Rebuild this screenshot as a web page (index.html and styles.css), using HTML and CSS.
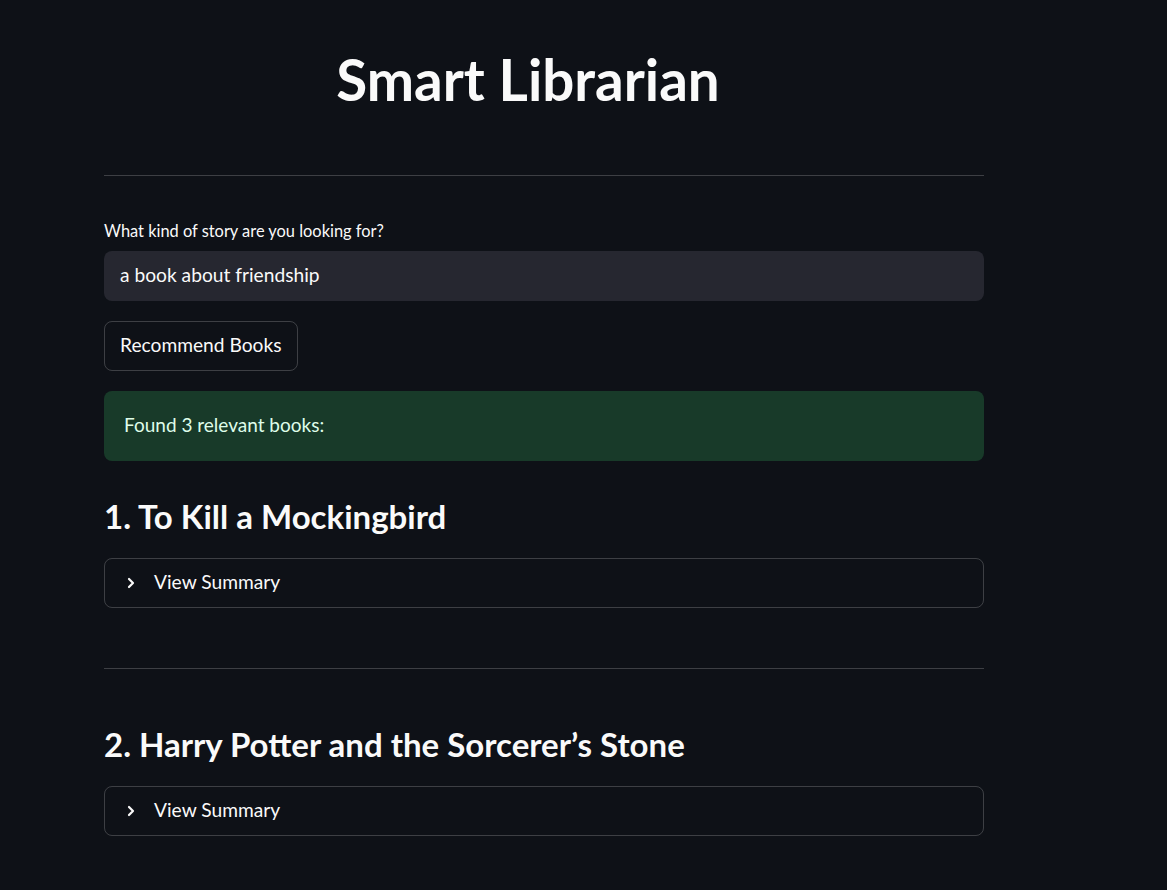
FILE: index.html
```html
<!DOCTYPE html>
<html lang="en">
<head>
<meta charset="utf-8">
<title>Smart Librarian</title>
<link rel="stylesheet" href="styles.css">
</head>
<body>
<main class="main">
  <h1 class="title">Smart Librarian</h1>
  <hr class="divider divider-top">
  <label class="field-label" for="q">What kind of story are you looking for?</label>
  <div class="text-input"><span id="q">a book about friendship</span></div>
  <button class="btn" type="button">Recommend Books</button>
  <div class="alert-success">Found 3 relevant books:</div>

  <h2 class="book-title first">1. To Kill a Mockingbird</h2>
  <div class="expander">
    <svg class="chev" width="10" height="12" viewBox="0 0 10 12"><polyline points="3,2 7,6 3,10" fill="none" stroke="#fafafa" stroke-width="2.2" stroke-linecap="round" stroke-linejoin="round"/></svg>
    <span>View Summary</span>
  </div>

  <hr class="divider divider-mid">

  <h2 class="book-title second">2. Harry Potter and the Sorcerer’s Stone</h2>
  <div class="expander">
    <svg class="chev" width="10" height="12" viewBox="0 0 10 12"><polyline points="3,2 7,6 3,10" fill="none" stroke="#fafafa" stroke-width="2.2" stroke-linecap="round" stroke-linejoin="round"/></svg>
    <span>View Summary</span>
  </div>
</main>
</body>
</html>
```

FILE: styles.css
```css
html, body {
  margin: 0;
  padding: 0;
  background: #0e1117;
}
body {
  font-family: "Lato", "Liberation Sans", sans-serif;
  color: #fafafa;
  height: 890px;
  overflow: hidden;
}
.main {
  width: 880px;
  margin-left: 104px;
  display: flex;
  flex-direction: column;
  align-items: stretch;
}
.title {
  margin: 0;
  padding-top: 39px;
  padding-right: 32px;
  font-size: 56.5px;
  line-height: 80px;
  font-weight: 700;
  text-align: center;
}
.divider {
  border: 0;
  border-top: 1px solid rgba(250, 250, 250, 0.2);
  margin: 0;
  height: 0;
}
.divider-top { margin-top: 56px; }
.divider-mid { margin-top: 60px; }
.field-label {
  margin-top: 44px;
  font-size: 16.4px;
  line-height: 22px;
  display: block;
}
.text-input {
  margin-top: 9px;
  height: 50px;
  box-sizing: border-box;
  background: #262730;
  border-radius: 8px;
  padding: 0 16px 3px;
  display: flex;
  align-items: center;
  font-size: 19.2px;
}
.btn {
  margin-top: 20px;
  align-self: flex-start;
  height: 50px;
  box-sizing: border-box;
  padding: 0 15px 3px;
  background: transparent;
  color: #fafafa;
  border: 1px solid rgba(250, 250, 250, 0.2);
  border-radius: 8px;
  font-family: inherit;
  font-size: 19.2px;
}
.alert-success {
  margin-top: 20px;
  height: 70px;
  box-sizing: border-box;
  border-radius: 8px;
  background: #183a29;
  color: #dffde9;
  padding: 0 20px 3px;
  display: flex;
  align-items: center;
  font-size: 19px;
}
.book-title {
  margin: 0;
  font-size: 33px;
  line-height: 44px;
  font-weight: 700;
}
.book-title.first { margin-top: 33px; }
.book-title.second { margin-top: 53px; }
.expander {
  margin-top: 20px;
  height: 50px;
  box-sizing: border-box;
  border: 1px solid rgba(250, 250, 250, 0.2);
  border-radius: 8px;
  display: flex;
  align-items: center;
  padding: 0 0 3px 21px;
  gap: 18px;
  font-size: 19.2px;
}
.chev { display: block; margin-top: 2px; }
```
